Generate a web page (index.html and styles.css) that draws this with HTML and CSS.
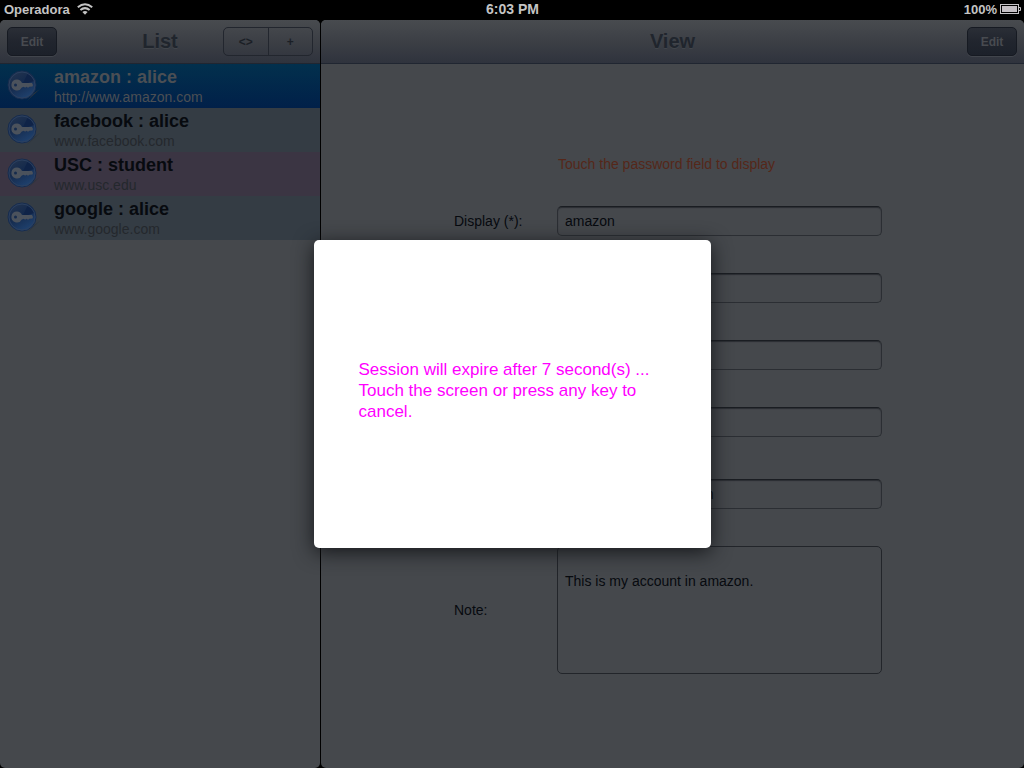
FILE: index.html
```html
<!DOCTYPE html>
<html lang="en">
<head>
<meta charset="utf-8">
<meta name="viewport" content="width=device-width, initial-scale=1">
<title>Accounts</title>
<link rel="stylesheet" href="styles.css">
</head>
<body>
<svg class="defs" aria-hidden="true">
  <defs>
    <linearGradient id="disc" x1="0" y1="0" x2="0.6" y2="1">
      <stop offset="0" stop-color="#26364f"/>
      <stop offset="0.5" stop-color="#152a4c"/>
      <stop offset="1" stop-color="#1f416e"/>
    </linearGradient>
    <symbol id="key" viewBox="0 0 36 36">
      <path d="M21 32 L34 20 L28 24 Z" fill="#2d353e"/>
      <circle cx="16" cy="16" r="14" fill="url(#disc)" stroke="#172c4e"/>
      <path d="M16 16 L22 4 A13 13 0 0 1 28 12 Z" fill="#0f2347"/>
      <circle cx="16" cy="16" r="13" fill="none" stroke="#2c405f"/>
      <path fill-rule="evenodd" d="M11 10.500 A5.500 5.500 0 1 0 15.800 18.500 L18 17.800 L19 18.800 L20.500 17.800 L22 18.800 L23.500 17.800 L26.500 17.500 L27 16 L26 14 L16 14 A5.500 5.500 0 0 0 11 10.500 Z M9.500 14.500 A1.500 1.500 0 1 1 9.500 17.500 A1.500 1.500 0 1 1 9.500 14.500 Z" fill="#4b525c"/>
    </symbol>
  </defs>
</svg>

<header class="status">
  <div class="status-left">
    <span>Operadora</span>
    <svg class="wifi" viewBox="0 0 16 12" role="img" aria-label="Wi-Fi">
      <g fill="none" stroke="#c4c4c4" stroke-width="2">
        <path d="M0.800 4.300 Q8 -1.900 15.200 4.300"/>
        <path d="M3.400 7 Q8 3.200 12.600 7"/>
      </g>
      <path d="M5.400 8.900 Q8 6.900 10.600 8.900 L8 11.700 Z" fill="#c4c4c4"/>
    </svg>
  </div>
  <time class="clock">6:03 PM</time>
  <div class="status-right">
    <span>100%</span>
    <svg class="battery" viewBox="0 0 21 10" role="img" aria-label="Battery full">
      <rect x="0.500" y="0.500" width="18" height="9" fill="none" stroke="#c4c2c5"/>
      <rect x="2" y="2" width="15" height="6" fill="#c4bfc4"/>
      <path d="M19 3.500 H20.500 V6.500 H19" fill="none" stroke="#c4c2c5"/>
    </svg>
  </div>
</header>

<main class="split">
  <section class="pane list-pane">
    <div class="toolbar">
      <button class="btn" type="button">Edit</button>
      <h1 class="title">List</h1>
      <div class="segments">
        <button class="segment" type="button">&lt;&gt;</button>
        <button class="segment" type="button">+</button>
      </div>
    </div>
    <ul class="accounts">
      <li class="account selected">
        <svg class="key"><use href="#key"/></svg>
        <div class="account-text"><strong class="name">amazon : alice</strong><span class="url">http://www.amazon.com</span></div>
      </li>
      <li class="account">
        <svg class="key"><use href="#key"/></svg>
        <div class="account-text"><strong class="name">facebook : alice</strong><span class="url">www.facebook.com</span></div>
      </li>
      <li class="account pink">
        <svg class="key"><use href="#key"/></svg>
        <div class="account-text"><strong class="name">USC : student</strong><span class="url">www.usc.edu</span></div>
      </li>
      <li class="account">
        <svg class="key"><use href="#key"/></svg>
        <div class="account-text"><strong class="name">google : alice</strong><span class="url">www.google.com</span></div>
      </li>
    </ul>
  </section>

  <section class="pane view-pane">
    <div class="toolbar">
      <h2 class="title">View</h2>
      <button class="btn" type="button">Edit</button>
    </div>
    <form class="form">
      <p class="hint">Touch the password field to display</p>
      <label class="label" for="display">Display (*):</label>
      <input class="field" id="display" type="text" value="amazon">
      <input class="field" type="text" aria-label="User">
      <input class="field" type="password" aria-label="Password">
      <input class="field" type="text" aria-label="Details">
      <input class="field field-url" type="text" aria-label="URL" value="http://www.amazon.com">
      <label class="label" for="note">Note:</label>
      <textarea class="field note" id="note">This is my account in amazon.</textarea>
    </form>
  </section>

  <div class="overlay">
    <div class="dialog" role="alertdialog" aria-labelledby="message">
      <p class="message" id="message">Session will expire after 7 second(s) ... Touch the screen or press any key to cancel.</p>
    </div>
  </div>
</main>
</body>
</html>
```
FILE: styles.css
```css
* {
  box-sizing: border-box;
}

body {
  margin: 0;
  min-height: 100vh;
  display: flex;
  flex-direction: column;
  background: #000;
  color: #070a0f;
  font-family: "Liberation Sans", Arial, sans-serif;
  font-size: 14px;
}

h1, h2, p, ul {
  margin: 0;
  padding: 0;
}

button, input, textarea {
  font: inherit;
  color: inherit;
}

.defs {
  position: absolute;
  width: 0;
  height: 0;
}

.status {
  display: grid;
  grid-template-columns: 1fr auto 1fr;
  align-items: center;
  height: 20px;
  padding: 0 3px 2px 4px;
  color: #c4c4c4;
  font-size: 13px;
  font-weight: bold;
}

.status-left, .status-right {
  display: flex;
  align-items: center;
}

.status-left {
  gap: 7px;
}

.status-right {
  justify-content: flex-end;
  gap: 3px;
}

.clock {
  font-size: 14px;
}

.wifi {
  width: 16px;
  height: 12px;
}

.battery {
  width: 21px;
  height: 10px;
}

.split {
  position: relative;
  flex: 1;
  display: flex;
  gap: 1px;
}

.pane {
  background: #45484c;
  border-radius: 5px;
  overflow: hidden;
}

.list-pane {
  flex: 0 0 320px;
}

.view-pane {
  flex: 1;
}

.toolbar {
  display: grid;
  grid-template-columns: 90px 1fr 90px;
  align-items: center;
  height: 44px;
  padding: 0 7px;
  background: linear-gradient(#484b4f, #3c3f45 50%, #2f333d);
  border-bottom: 1px solid #202631;
}

.title {
  grid-column: 2;
  grid-row: 1;
  padding-bottom: 2px;
  color: #20252d;
  font-size: 20px;
  line-height: 24px;
  text-align: center;
  text-shadow: 0 1px 0 #41454b;
}

.btn {
  grid-row: 1;
  width: 50px;
  height: 29px;
  padding: 0;
  border: 1px solid #161a22;
  border-radius: 5px;
  background: linear-gradient(#2a2e36, #21252e 50%, #1c212a);
  box-shadow: 0 1px 0 #41454c;
  color: #484b50;
  font-size: 12px;
  font-weight: bold;
}

.title + .btn {
  grid-column: 3;
  justify-self: end;
}

.segments {
  display: flex;
  justify-self: end;
  width: 90px;
  height: 29px;
  border: 1px solid #22262e;
  border-radius: 5px;
}

.segment {
  flex: 1;
  padding: 0;
  border: 0;
  background: none;
  color: #1b1f26;
  font-size: 12px;
  font-weight: bold;
}

.segment + .segment {
  border-left: 1px solid #22262e;
}

.accounts {
  list-style: none;
}

.account {
  display: flex;
  gap: 10px;
  height: 44px;
  padding: 0 8px 0 6px;
  background: #343c44;
}

.account.selected {
  background: linear-gradient(#02304d, #012049);
}

.account.pink {
  background: #3b3543;
}

.key {
  flex: none;
  width: 36px;
  height: 36px;
  margin-top: 5px;
}

.account-text {
  display: flex;
  flex-direction: column;
  padding: 2px;
}

.name {
  font-size: 18px;
  line-height: 22px;
}

.url {
  line-height: 18px;
  color: #24282d;
}

.selected .name,
.selected .url {
  color: #4b4f54;
}

.form {
  display: grid;
  grid-template-columns: 103px 325px;
  row-gap: 37px;
  align-items: center;
  justify-content: center;
  padding: 90px 9px 94px 0;
}

.form > * {
  grid-column: 2;
}

.form > .label {
  grid-column: 1;
}

.hint {
  padding-left: 1px;
  line-height: 20px;
  margin-bottom: -5px;
  color: #552719;
}

.field {
  width: 100%;
  height: 30px;
  padding: 0 7px;
  border: 1px solid #2b2e33;
  border-top-color: #1a1d22;
  border-radius: 5px;
  background: transparent;
  box-shadow: inset 0 1px 1px #2a2d32;
  outline: none;
}

.field-url {
  margin-top: 5px;
}

.note {
  height: 128px;
  padding: 25px 7px 8px;
  border-color: #22252a;
  box-shadow: none;
  line-height: 18px;
  resize: none;
}

.overlay {
  position: absolute;
  inset: 0;
  display: flex;
  align-items: center;
  justify-content: center;
}

.dialog {
  display: flex;
  align-items: center;
  width: 397px;
  min-height: 308px;
  padding: 0 45px 8px;
  border-radius: 5px;
  background: #fff;
  box-shadow: 0 4px 20px #15171a;
}

.message {
  color: #f0f;
  font-size: 17px;
  line-height: 21px;
}
```
